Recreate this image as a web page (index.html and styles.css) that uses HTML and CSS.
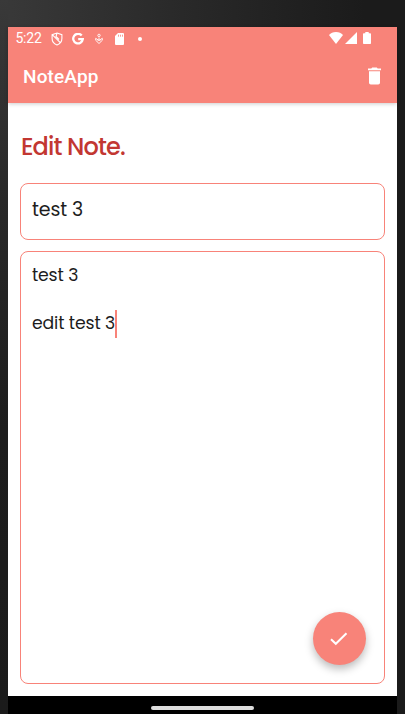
FILE: index.html
```html
<!DOCTYPE html>
<html lang="en">
<head>
<meta charset="utf-8">
<title>NoteApp</title>
<link rel="stylesheet" href="styles.css">
</head>
<body>
<main class="screen">
  <header class="header">
    <div class="status">
      <div class="status-left">
        <span class="clock">5:22</span>
        <svg class="icon shield" width="12" height="14" viewBox="0 0 12 14" fill="none" stroke="#fff" stroke-width="1.1"><path d="M6 1 10.9 2.7V6.5C10.9 9.5 9 11.8 6 13 3 11.8 1.1 9.5 1.1 6.5V2.7ZM1.5 2.8 9.5 10.8M6 1.2 5 4.5 8 7.5"/></svg>
        <svg class="icon google" width="12" height="12" viewBox="0 0 12 12" fill="none" stroke="#fff" stroke-width="2.3"><path d="M9.7 2.5A4.8 4.8 0 1 0 10.8 6.2H6.2"/></svg>
        <svg class="icon person" width="8" height="12" viewBox="0 0 8 12" fill="none" stroke="#fff" stroke-width=".9"><circle cx="4" cy="2.4" r="1.2"/><path d="M4 4.5V6M.7 5.3 4 7.5 7.3 5.3V7.3L4 10.5.7 7.3ZM2.5 7.8 4 6.5 5.5 7.8"/></svg>
        <svg class="icon card" width="9" height="12" viewBox="0 0 9 12"><path fill="#fff" d="M3 0H8Q9 0 9 1V11Q9 12 8 12H1Q0 12 0 11V3Z"/><path stroke="#f88379" stroke-width=".8" d="M3.5 1.7V3.7M5.5 1.7V3.7M7.5 1.7V3.7"/></svg>
        <span class="dot"></span>
      </div>
      <div class="status-right">
        <svg width="14" height="12" viewBox="0 0 14 12" fill="#fff"><path d="M7 0C10 0 12.3 1.1 14 2.9L7 12 0 2.9C1.7 1.1 4 0 7 0Z"/></svg>
        <svg class="signal" width="12" height="12" viewBox="0 0 12 12" fill="#fff"><path d="M12 0V12H0Z"/></svg>
        <svg class="battery" width="8" height="12" viewBox="0 0 8 12" fill="#fff"><path d="M2.3 0H5.7V1.3H7.2Q8 1.3 8 2.1V11.2Q8 12 7.2 12H.8Q0 12 0 11.2V2.1Q0 1.3.8 1.3H2.3Z"/></svg>
      </div>
    </div>
    <div class="toolbar">
      <span class="app-name">NoteApp</span>
      <svg class="trash" width="13" height="18" viewBox="0 0 13 18" fill="#fff"><path d="M0 1.5H3.3L4.2.5H8.8L9.7 1.5H13V3.3H0ZM1 4.3H12V15.7Q12 17.5 10.2 17.5H2.8Q1 17.5 1 15.7Z"/></svg>
    </div>
  </header>
  <section class="content">
    <h1 class="title">Edit Note.</h1>
    <div class="field name"><span class="name-text">test 3</span></div>
    <div class="field note">
      <p class="line">test 3</p>
      <p class="line"></p>
      <p class="line"><span class="line-text">edit test 3</span><span class="caret"></span></p>
    </div>
  </section>
  <button class="fab" aria-label="Save"><svg width="18" height="14" viewBox="0 0 18 14" fill="none" stroke="#fff" stroke-width="2"><path d="M1 7.2 5.8 11.8 16.5 1.2"/></svg></button>
  <footer class="nav"><span class="handle"></span></footer>
</main>
</body>
</html>
```

FILE: styles.css
```css
* { box-sizing: border-box; }

body {
  margin: 0;
  height: 714px;
  padding: 27px 8px 0;
  overflow: hidden;
  background:
    linear-gradient(170deg, #393939 0, #292929 28%, #1d1d1d 60%, #1b1b1b 100%) 0 0 / 8px 100% no-repeat,
    linear-gradient(90deg, #393939, #292929 45%, #1b1b1b 90%);
  font-family: Poppins, Inter, sans-serif;
  color: #1d1d1d;
}

.screen {
  position: relative;
  display: flex;
  flex-direction: column;
  width: 389px;
  height: 687px;
  background: #fff;
}

.header {
  height: 76px;
  background: #f88379;
  color: #fff;
  font-family: Roboto, sans-serif;
  box-shadow: 0 1px 4px rgba(0, 0, 0, .2);
}

.status {
  display: flex;
  justify-content: space-between;
  height: 23px;
  padding: 0 26px 0 7.5px;
}

.status-left, .status-right { display: flex; align-items: center; }
.status-right { padding-bottom: 1px; }
.clock { width: 28.5px; font-size: 14px; line-height: 23px; letter-spacing: -.25px; }
.shield { margin-left: 7px; }
.google { margin-left: 9px; }
.person { margin-left: 11px; }
.card { margin-left: 12px; }
.dot { width: 4px; height: 4px; margin-left: 14px; border-radius: 50%; background: #fff; }
.signal { margin-left: 2px; }
.battery { margin-left: 6px; }

.toolbar {
  display: flex;
  align-items: center;
  justify-content: space-between;
  height: 53px;
  padding: 0 16px 0 15px;
}

.app-name { font-size: 19px; font-weight: 500; letter-spacing: .15px; }
.trash { margin-bottom: 1px; }

.content {
  flex: 1;
  display: flex;
  flex-direction: column;
  padding: 28px 12.4px 12px;
}

.title {
  height: 32px;
  margin: 0 0 20px .5px;
  font-size: 24px;
  line-height: 32px;
  font-weight: 500;
  letter-spacing: -.85px;
  color: #c23732;
}

.field {
  border: 1px solid #f88379;
  border-radius: 8px;
  padding-left: 10.5px;
}

.name { height: 57px; margin-bottom: 11px; }
.name-text { font-size: 19px; line-height: 51px; letter-spacing: -.1px; }
.note { flex: 1; padding-top: 11px; }

.line {
  display: flex;
  align-items: center;
  height: 24px;
  margin: 0;
  font-size: 17.25px;
  letter-spacing: -.12px;
}

.caret { width: 2px; height: 28px; margin: 1px 0 0 -.5px; background: #f88379; }

.fab {
  position: absolute;
  left: 304.5px;
  top: 585px;
  display: grid;
  place-items: center;
  width: 53px;
  height: 53px;
  padding: 0;
  border: 0;
  border-radius: 50%;
  background: #f88379;
  box-shadow: 0 4px 8px rgba(0, 0, 0, .27);
}

.nav {
  display: flex;
  justify-content: center;
  align-items: center;
  height: 18px;
  padding-top: 5px;
  background: #000;
}

.handle { width: 103px; height: 4px; border-radius: 2px; background: #ddd; }
```
